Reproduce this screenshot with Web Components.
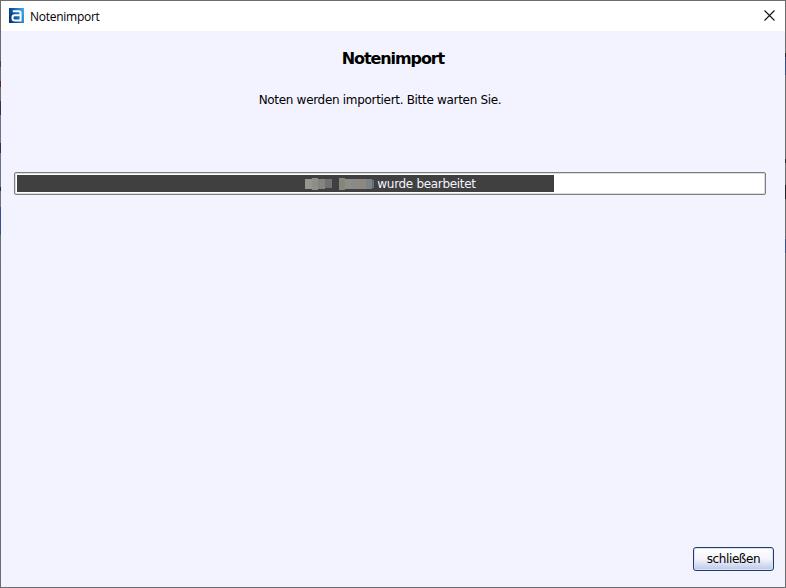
<!DOCTYPE html>
<html lang="de">
<head>
<meta charset="utf-8">
<title>Notenimport</title>
<style>
  html, body { margin: 0; padding: 0; height: 100%; background: #f3f3ff; }
</style>
</head>
<body>
<import-window heading="Notenimport">
  <import-title>Notenimport</import-title>
  <import-message>Noten werden importiert. Bitte warten Sie.</import-message>
  <import-progress value="72">wurde bearbeitet</import-progress>
  <close-button slot="footer">schließen</close-button>
</import-window>

<script>
class ImportWindow extends HTMLElement {
  constructor () {
    super()
    this.attachShadow({ mode: 'open' })
  }

  connectedCallback () {
    this.shadowRoot.innerHTML = /* html */`
      <style>
        :host {
          display: flex;
          flex-direction: column;
          position: relative;
          box-sizing: border-box;
          width: 786px;
          height: 588px;
          border: 1px solid #6c6c6c;
          background: #f3f3ff;
        }
        /* desktop colours showing through the window edge */
        .edge { position: absolute; top: 30px; width: 1px; height: 230px; }
        .edge.left {
          left: -1px;
          background: linear-gradient(#6c6c6c 0 30px, #4a3a5a 30px 36px, #6c6c72 36px 50px, #5a2a2a 50px 56px,
            #6c6c72 56px 70px, #2c3450 70px 84px, #6a7488 84px 112px, #3c2a4c 112px 122px, #6a7488 122px 156px,
            #2a2a3a 156px 160px, #6c7080 160px 176px, #33508c 176px 204px, #6c6c72 204px);
        }
        .edge.right {
          right: -1px;
          background: linear-gradient(#6c6c6c 0 22px, #222 22px 26px, #33508c 26px 44px, #6c6c6c 44px 128px,
            #222 128px 132px, #6c6c6c 132px 154px, #222 154px 168px, #6c6c6c 168px 208px, #33508c 208px 222px, #6c6c6c 222px);
        }
        .bar {
          display: flex;
          align-items: center;
          height: 30px;
          flex: none;
          background: #fff;
          padding: 0 8px;
          font: 12px "Open Sans", "Noto Sans", sans-serif;
          letter-spacing: -0.27px;
          color: #000;
        }
        .logo { width: 15px; height: 15px; margin: 0 6px 2px 0; flex: none; }
        .name { flex: 1; }
        .x { width: 13px; height: 13px; margin: 0 1px 1px 0; flex: none; }
        main {
          flex: 1;
          display: flex;
          flex-direction: column;
          padding: 0 11px 16px 13px;
        }
        .content { flex: 1; }
        .footer { display: flex; justify-content: flex-end; }
      </style>
      <div class="edge left"></div>
      <div class="edge right"></div>
      <div class="bar">
        <svg class="logo" viewBox="0 0 15 15">
          <defs>
            <linearGradient id="g" x1="0" y1="0.6" x2="1" y2="0.3">
              <stop offset="0" stop-color="#0c3473"/>
              <stop offset=".5" stop-color="#1466b4"/>
              <stop offset="1" stop-color="#3fa8e6"/>
            </linearGradient>
          </defs>
          <rect width="15" height="15" fill="url(#g)"/>
          <path d="M3.8 3.2H9.8Q11.6 3.2 11.6 5V12.6H5.8Q3.5 12.6 3.5 10.3V9.5Q3.5 7.2 5.8 7.2H10.5" fill="none" stroke="#fff" stroke-width="2"/>
        </svg>
        <span class="name">${this.getAttribute('heading')}</span>
        <svg class="x" viewBox="0 0 13 13">
          <path d="M1.5 1.5L11.5 11.5M11.5 1.5L1.5 11.5" stroke="#111" stroke-width="1.1" fill="none"/>
        </svg>
      </div>
      <main>
        <div class="content"><slot></slot></div>
        <div class="footer"><slot name="footer"></slot></div>
      </main>
    `
  }
}

class ImportTitle extends HTMLElement {
  constructor () {
    super()
    this.attachShadow({ mode: 'open' })
  }

  connectedCallback () {
    this.shadowRoot.innerHTML = /* html */`
      <style>
        :host {
          display: block;
          margin: 18px 2px 0 0;
          text-align: center;
          font: bold 16px/20px "DejaVu Sans", sans-serif;
          letter-spacing: -1.1px;
          color: #000;
        }
      </style>
      <slot></slot>
    `
  }
}

class ImportMessage extends HTMLElement {
  constructor () {
    super()
    this.attachShadow({ mode: 'open' })
  }

  connectedCallback () {
    this.shadowRoot.innerHTML = /* html */`
      <style>
        :host {
          display: block;
          margin: 24px 28px 0 0;
          text-align: center;
          font: 12px/14px "DejaVu Sans", sans-serif;
          letter-spacing: -0.31px;
          color: #000;
        }
      </style>
      <slot></slot>
    `
  }
}

class ImportProgress extends HTMLElement {
  constructor () {
    super()
    this.attachShadow({ mode: 'open' })
  }

  connectedCallback () {
    // pixelated name: [width, colour, height]
    const pieces = [
      [7, '#96968e', 10], [6, '#8f8f88', 12], [7, '#85857f', 10], [7, '#6f7272', 9], [7, 'transparent', 9],
      [6, '#86867f', 12], [7, '#8c8c88', 10], [7, '#8c8a84', 10], [7, '#8e8680', 10], [6, '#7b8286', 10], [2, '#667074', 8]
    ]
    const blur = pieces
      .map(([w, c, h]) => `<i style="width:${w}px;height:${h}px;background:${c}"></i>`)
      .join('')
    this.shadowRoot.innerHTML = /* html */`
      <style>
        :host {
          display: block;
          margin-top: 65px;
          margin-right: 8px;
          box-sizing: border-box;
          height: 23px;
          border: 1px solid #7d7d7d;
          border-radius: 2px;
          padding: 2px;
          background: #fff;
          box-shadow: inset 0 0 0 1px #dcdcdc;
        }
        .track { position: relative; height: 100%; }
        .fill {
          width: ${this.getAttribute('value')}%;
          height: 100%;
          background: #404040;
        }
        .label {
          position: absolute;
          inset: 0;
          display: flex;
          align-items: center;
          justify-content: center;
          gap: 3px;
          padding-left: 1px;
          font: 12px "DejaVu Sans", sans-serif;
          letter-spacing: -0.32px;
          color: #f3f3ff;
        }
        .blur { display: flex; align-items: center; }
        .blur i { display: block; }
      </style>
      <div class="track">
        <div class="fill"></div>
        <div class="label"><span class="blur">${blur}</span><span><slot></slot></span></div>
      </div>
    `
  }
}

class CloseButton extends HTMLElement {
  constructor () {
    super()
    this.attachShadow({ mode: 'open' })
  }

  connectedCallback () {
    this.shadowRoot.innerHTML = /* html */`
      <style>
        :host { display: block; }
        button {
          display: block;
          box-sizing: border-box;
          width: 81px;
          height: 24px;
          margin: 0;
          padding: 0;
          border: 1px solid #1c3d72;
          border-radius: 3px;
          background: linear-gradient(#ffffff, #f4f4fa 50%, #bcc8e8);
          box-shadow: inset 0 0 0 1px #dbe2f4;
          font: 12px "DejaVu Sans", sans-serif;
          letter-spacing: -0.4px;
          color: #000;
        }
      </style>
      <button><slot></slot></button>
    `
  }
}

customElements.define('import-window', ImportWindow)
customElements.define('import-title', ImportTitle)
customElements.define('import-message', ImportMessage)
customElements.define('import-progress', ImportProgress)
customElements.define('close-button', CloseButton)
</script>
</body>
</html>
